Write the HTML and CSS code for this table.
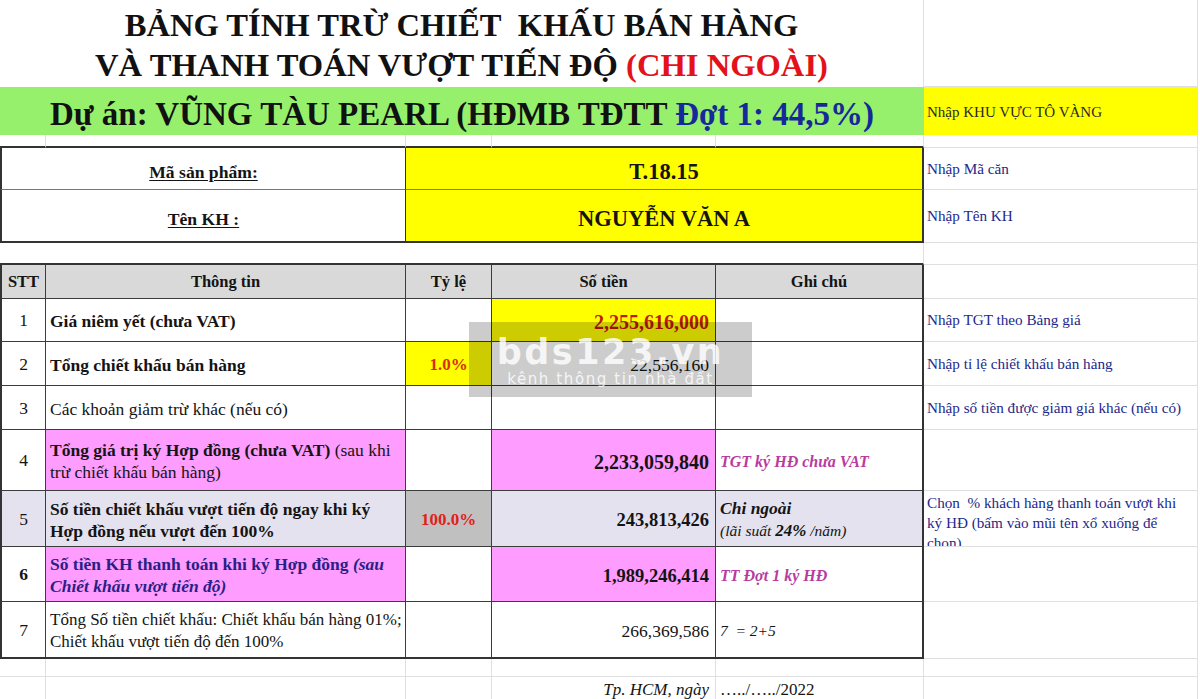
FILE: index.html
```html
<!DOCTYPE html>
<html lang="vi">
<head>
<meta charset="utf-8">
<title>Bảng tính trừ chiết khấu</title>
<link rel="stylesheet" href="styles.css">
</head>
<body>
<div class="sheet">
  <!-- title -->
  <div class="c title s5">BẢNG TÍNH TRỪ CHIẾT&nbsp; KHẤU BÁN HÀNG<br>VÀ THANH TOÁN VƯỢT TIẾN ĐỘ <span class="red">(CHI NGOÀI)</span></div>
  <div class="c f"></div>

  <!-- project -->
  <div class="c project s5"><span>Dự án: VŨNG TÀU PEARL (HĐMB TĐTT <span class="navy">Đợt 1: 44,5%)</span></span></div>
  <div class="c f note-yellow">Nhập KHU VỰC TÔ VÀNG</div>

  <!-- gap -->
  <div class="c gap"></div><div class="c gap"></div><div class="c gap"></div><div class="c gap"></div><div class="c gap"></div>
  <div class="c f"></div>

  <!-- Mã sản phẩm -->
  <div class="c s2 box-l"><span class="lbl">Mã sản phẩm:</span></div>
  <div class="c s3 box-v yellow">T.18.15</div>
  <div class="c f note">Nhập Mã căn</div>

  <div class="c s2 box-l box-last"><span class="lbl">Tên KH :</span></div>
  <div class="c s3 box-v box-last yellow">NGUYỄN VĂN A</div>
  <div class="c f note">Nhập Tên KH</div>

  <!-- gap 2 -->
  <div class="c s5 gap2"></div>
  <div class="c f"></div>

  <!-- header -->
  <div class="c t tl hd ctr">STT</div>
  <div class="c t hd ctr">Thông tin</div>
  <div class="c t hd ctr">Tỷ lệ</div>
  <div class="c t hd ctr">Số tiền</div>
  <div class="c t tr hd ctr">Ghi chú</div>
  <div class="c f"></div>

  <!-- 1 -->
  <div class="c t tl ctr">1</div>
  <div class="c t txt"><b>Giá niêm yết (chưa VAT)</b></div>
  <div class="c t"></div>
  <div class="c t num yellow big dark-red">2,255,616,000</div>
  <div class="c t tr"></div>
  <div class="c f note">Nhập TGT theo Bảng giá</div>

  <!-- 2 -->
  <div class="c t tl ctr">2</div>
  <div class="c t txt"><b>Tổng chiết khấu bán hàng</b></div>
  <div class="c t ctr yellow pct orange">1.0%</div>
  <div class="c t num">22,556,160</div>
  <div class="c t tr"></div>
  <div class="c f note">Nhập tỉ lệ chiết khấu bán hàng</div>

  <!-- 3 -->
  <div class="c t tl ctr">3</div>
  <div class="c t txt">Các khoản giảm trừ khác (nếu có)</div>
  <div class="c t"></div>
  <div class="c t num"></div>
  <div class="c t tr"></div>
  <div class="c f note">Nhập số tiền được giảm giá khác (nếu có)</div>

  <!-- 4 -->
  <div class="c t tl ctr">4</div>
  <div class="c t txt pink"><span><b>Tổng giá trị ký Hợp đồng (chưa VAT)</b> (sau khi<br>trừ chiết khấu bán hàng)</span></div>
  <div class="c t"></div>
  <div class="c t num pink big">2,233,059,840</div>
  <div class="c t tr gc magenta">TGT ký HĐ chưa VAT</div>
  <div class="c f"></div>

  <!-- 5 -->
  <div class="c t tl ctr lav">5</div>
  <div class="c t txt lav"><b>Số tiền chiết khấu vượt tiến độ ngay khi ký<br>Hợp đồng nếu vượt đến 100%</b></div>
  <div class="c t ctr grey pct red2">100.0%</div>
  <div class="c t num lav mid">243,813,426</div>
  <div class="c t tr lav gc2"><span><b class="chi">Chi ngoài</b><br><i class="lai">(lãi suất <b>24%</b> /năm)</i></span></div>
  <div class="c f note top"><span>Chọn&nbsp; % khách hàng thanh toán vượt khi<br>ký HĐ (bấm vào mũi tên xổ xuống để<br>chọn)</span></div>

  <!-- 6 -->
  <div class="c t tl ctr"><b>6</b></div>
  <div class="c t txt pink indigo"><b>Số tiền KH thanh toán khi ký Hợp đồng <i>(sau<br>Chiết khấu vượt tiến độ)</i></b></div>
  <div class="c t"></div>
  <div class="c t num pink mid">1,989,246,414</div>
  <div class="c t tr gc magenta">TT Đợt 1 ký HĐ</div>
  <div class="c f"></div>

  <!-- 7 -->
  <div class="c t tl tb ctr">7</div>
  <div class="c t tb txt nowrap"><span>Tổng Số tiền chiết khấu: Chiết khấu bán hàng 01%;<br>Chiết khấu vượt tiến độ đến 100%</span></div>
  <div class="c t tb"></div>
  <div class="c t tb num">266,369,586</div>
  <div class="c t tr tb gc eq">7&nbsp; = 2+5</div>
  <div class="c f"></div>

  <!-- empty -->
  <div class="c"></div><div class="c"></div><div class="c"></div><div class="c"></div><div class="c"></div><div class="c f"></div>

  <!-- date -->
  <div class="c"></div>
  <div class="c"></div>
  <div class="c"></div>
  <div class="c num date">Tp. HCM, ngày</div>
  <div class="c gc datev">…../…../2022</div>
  <div class="c f"></div>

  <div class="wm">
    <div class="wm-big">bds123.vn</div>
    <div class="wm-small">kênh thông tin nhà đất</div>
  </div>
</div>
</body>
</html>
```

FILE: styles.css
```css
* {
  box-sizing: border-box;
  margin: 0;
  padding: 0;
}

html,
body {
  background: #ffffff;
}

body {
  margin: 0;
  font-family: "Liberation Serif", "Times New Roman", serif;
  color: #141414;
  overflow: hidden;
}

.sheet {
  position: relative;
  display: grid;
  width: 1198px;
  grid-template-columns: 46px 360px 86px 224px 208px 274px;
  grid-template-rows: 87px 48px 13px 42px 53px 22px 34px 43px 44px 44px 61px 56px 55px 57px 18px 24px;
}

.c {
  display: flex;
  align-items: center;
  min-width: 0;
  overflow: hidden;
  border-right: 1px solid #e0e0e3;
  border-bottom: 1px solid #e0e0e3;
  font-size: 17.5px;
  line-height: 22px;
}

.s2 { grid-column: span 2; }
.s3 { grid-column: span 3; }
.s5 { grid-column: span 5; }

/* title */
.title {
  display: block;
  text-align: center;
  font-weight: bold;
  font-size: 32.6px;
  line-height: 40px;
  padding-top: 5px;
  border-bottom: none;
  color: #111;
}

.red {
  color: #e3121a;
}

.project {
  justify-content: center;
  background: #96f06c;
  font-weight: bold;
  font-size: 33px;
  line-height: 40px;
  padding-top: 6px;
  border: none;
  color: #111;
}

.navy {
  color: #16299a;
}

.f {
  border-right: 1px solid #e0e0e3;
}

.note-yellow {
  background: #ffff00;
  font-size: 15px;
  color: #2a2a2a;
  padding-left: 3px;
  padding-top: 2px;
  border-bottom: none;
}

.note {
  font-size: 15.2px;
  color: #23288a;
  padding-left: 3px;
  line-height: 20px;
}

.note.top {
  align-items: flex-start;
  padding-top: 2px;
  white-space: nowrap;
}

/* gaps */
.gap {
  border-bottom: 2px solid #333;
}

.gap2 {
  border-bottom: 2px solid #333;
}

/* product box */
.box-l {
  justify-content: center;
  border-left: 2px solid #333;
  border-right: 1px solid #333;
  border-bottom: 1px solid #777;
  padding-top: 6px;
}

.box-v {
  justify-content: center;
  border-right: 2px solid #333;
  border-bottom: 1px solid #777;
  font-weight: bold;
  font-size: 22.5px;
  padding-top: 6px;
}

.box-last {
  border-bottom: 2px solid #333;
}

.lbl {
  font-weight: bold;
  font-size: 17.6px;
  text-decoration: underline;
  text-underline-offset: 2px;
}

.yellow {
  background: #ffff00;
}

.pink {
  background: #ff9cff;
}

.lav {
  background: #e4e2ee;
}

.grey {
  background: #c0c0c0;
}

/* main table */
.t {
  border-right: 1px solid #3c3c3c;
  border-bottom: 1px solid #3c3c3c;
}

.tl {
  border-left: 2px solid #333;
}

.tr {
  border-right: 2px solid #333;
}

.tb {
  border-bottom: 2px solid #333;
}

.hd {
  background: #d9d9d9;
  font-weight: bold;
  font-size: 16.5px;
}

.ctr {
  justify-content: center;
}

.txt {
  padding-left: 4px;
  padding-top: 2px;
}

.nowrap {
  white-space: nowrap;
  font-size: 17px;
}

.num {
  justify-content: flex-end;
  padding-right: 6px;
  padding-top: 3px;
}

.big {
  font-weight: bold;
  font-size: 20px;
}

.mid {
  font-weight: bold;
  font-size: 18.5px;
}

.dark-red {
  color: #bf1a0e;
}

.pct {
  font-weight: bold;
  font-size: 17px;
  padding-top: 2px;
}

.orange {
  color: #d8300a;
}

.red2 {
  color: #e0201c;
}

.indigo {
  color: #2a1f86;
}

.gc {
  padding-left: 4px;
  padding-top: 3px;
}

.gc2 {
  padding-left: 4px;
  padding-top: 2px;
}

.magenta {
  color: #b83b9f;
  font-weight: bold;
  font-style: italic;
  font-size: 16px;
}

.chi {
  font-style: italic;
  font-size: 17.5px;
}

.lai {
  font-size: 15.5px;
}

.lai b {
  font-size: 17px;
}

.eq {
  font-style: italic;
  font-size: 15.5px;
}

.date {
  font-style: italic;
  font-size: 17px;
  padding-top: 2px;
}

.datev {
  font-size: 17px;
  padding-top: 2px;
}

/* watermark overlay */
.wm {
  position: absolute;
  left: 469px;
  top: 322px;
  width: 283px;
  height: 75px;
  background: rgba(0, 0, 0, 0.2);
  text-align: center;
  font-family: "DejaVu Sans", Verdana, sans-serif;
  color: rgba(255, 255, 255, 0.82);
}

.wm-big {
  font-weight: bold;
  font-size: 35px;
  line-height: 35px;
  letter-spacing: 2.5px;
  padding-top: 13px;
}

.wm-small {
  font-size: 15px;
  line-height: 18px;
  letter-spacing: 1.6px;
}
```
